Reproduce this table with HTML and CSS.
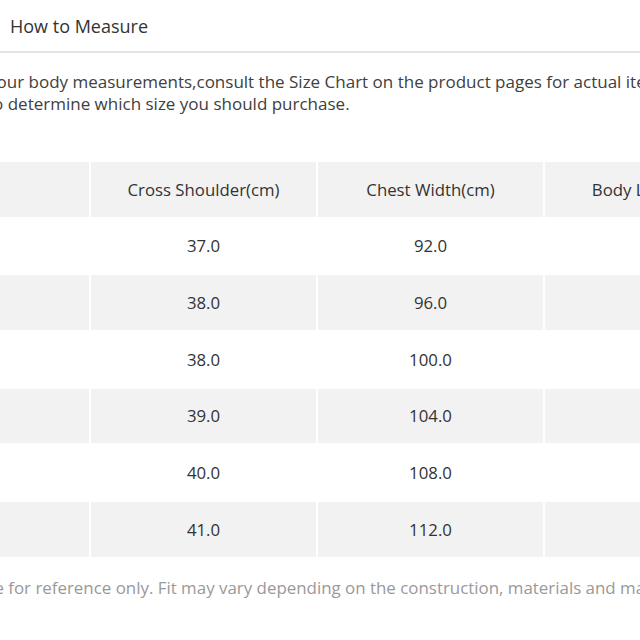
FILE: index.html
```html
<!DOCTYPE html>
<html lang="en">
<head>
<meta charset="utf-8">
<title>Size Chart</title>
<link rel="stylesheet" href="styles.css">
</head>
<body>
<div class="page">
  <div class="tabs">
    <div class="tab tab-size">Size Chart</div>
    <div class="tab">How to Measure</div>
  </div>
  <p class="intro">Your body measurements,consult the Size Chart on the product pages for actual item measurements<br>to determine which size you should purchase.</p>
  <table class="chart">
    <thead>
      <tr><th>Size</th><th>Cross Shoulder(cm)</th><th>Chest Width(cm)</th><th>Body Length(cm)</th></tr>
    </thead>
    <tbody>
      <tr><td>S</td><td>37.0</td><td>92.0</td><td>64.0</td></tr>
      <tr><td>M</td><td>38.0</td><td>96.0</td><td>66.0</td></tr>
      <tr><td>L</td><td>38.0</td><td>100.0</td><td>68.0</td></tr>
      <tr><td>XL</td><td>39.0</td><td>104.0</td><td>70.0</td></tr>
      <tr><td>XXL</td><td>40.0</td><td>108.0</td><td>72.0</td></tr>
      <tr><td>XXXL</td><td>41.0</td><td>112.0</td><td>74.0</td></tr>
    </tbody>
  </table>
  <p class="note">*Measurements are for reference only. Fit may vary depending on the construction, materials and manufacturer.</p>
</div>
</body>
</html>
```
FILE: styles.css
```css
html, body {
  margin: 0;
  padding: 0;
  background: #ffffff;
  overflow: hidden;
}
body {
  font-family: "Open Sans", "Liberation Sans", sans-serif;
  color: #333333;
  width: 640px;
  height: 640px;
}
.page {
  margin-left: -160px;
  width: 1200px;
}
.tabs {
  display: flex;
  align-items: center;
  height: 51px;
  border-bottom: 2px solid #e4e4e4;
}
.tab {
  font-size: 18px;
  padding: 0 10px;
  color: #333333;
}
.tab-size {
  width: 140px;
  box-sizing: content-box;
}
.intro {
  margin: 18px 0 0 147px;
  width: 900px;
  font-size: 17px;
  line-height: 22px;
  color: #404040;
}
.chart {
  margin-top: 45px;
  margin-left: 22px;
  border-collapse: separate;
  border-spacing: 2px;
}
.chart th,
.chart td {
  width: 225px;
  height: 54.67px;
  padding: 0;
  text-align: center;
  font-size: 16.8px;
  font-weight: normal;
  color: #333333;
  background: #ffffff;
}
.chart th,
.chart tbody tr:nth-child(even) td {
  background: #f2f2f2;
}
.note {
  margin: 18px 0 0 6px;
  font-size: 16.9px;
  line-height: 22px;
  color: #999999;
}
```
